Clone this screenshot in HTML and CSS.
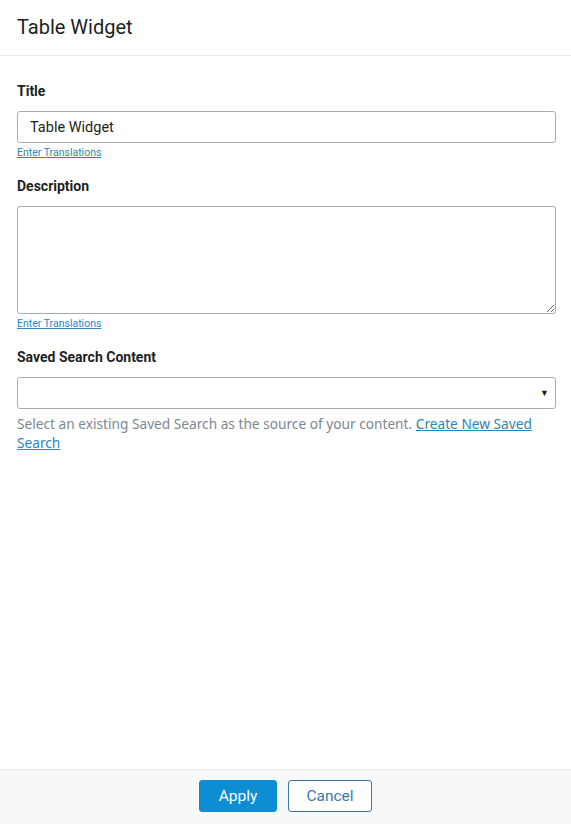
FILE: index.html
```html
<!DOCTYPE html>
<html>
<head>
<meta charset="utf-8">
<link rel="stylesheet" href="styles.css">
</head>
<body>
<div class="panel">
  <header class="head"><h1 class="head-title">Table Widget</h1></header>
  <main class="body">
    <div class="field">
      <label class="label">Title</label>
      <input class="input" type="text" value="Table Widget">
      <a class="trans" href="#">Enter Translations</a>
    </div>
    <div class="field">
      <label class="label">Description</label>
      <textarea class="textarea"></textarea>
      <a class="trans" href="#">Enter Translations</a>
    </div>
    <div class="field">
      <label class="label">Saved Search Content</label>
      <div class="select"><span class="caret">▼</span></div>
      <p class="help">Select an existing Saved Search as the source of your content. <a class="help-link" href="#">Create New Saved Search</a></p>
    </div>
  </main>
  <footer class="foot">
    <button class="btn btn-primary">Apply</button>
    <button class="btn btn-secondary">Cancel</button>
  </footer>
</div>
</body>
</html>
```
FILE: styles.css
```css
* { box-sizing: border-box; }
html, body { margin: 0; padding: 0; height: 100%; }
body { font-family: Roboto, "Noto Sans", sans-serif; color: #1d1f22; background: #fff; }
.panel { display: flex; flex-direction: column; height: 824px; }
.head { height: 56px; border-bottom: 1px solid #e3e6e8; padding: 0 17px; display: flex; align-items: center; }
.head-title { margin: 0; font-size: 20px; font-weight: 400; letter-spacing: 0; padding-bottom: 2px; }
.body { flex: 1; padding: 26px 15px 0 17px; }
.field { display: flex; flex-direction: column; margin-bottom: 18px; }
.label { font-size: 14px; font-weight: 700; line-height: 18px; margin-bottom: 11px; letter-spacing: 0; }
.input { height: 32px; margin: 0; border: 1px solid #a4adb3; border-radius: 3px; padding: 0 12px; font: 14.5px Roboto, "Noto Sans", sans-serif; color: #1d1f22; width: 100%; }
.textarea { height: 108px; margin: 0; border: 1px solid #a4adb3; border-radius: 3px; width: 100%; resize: vertical; display: block; font: 14px Roboto, sans-serif; }
.trans { font-size: 10.5px; color: #2a86c0; line-height: 13px; margin-top: 3px; align-self: flex-start; text-decoration: underline; }
.select { height: 32px; border: 1px solid #a4adb3; border-radius: 3px; display: flex; align-items: center; justify-content: flex-end; padding-right: 6px; }
.caret { font-size: 9px; color: #1d1f22; }
.help { margin: 5px 0 0; font-family: "Noto Sans", sans-serif; font-size: 13.7px; line-height: 19px; color: #7b8891; }
.help-link { color: #2a86c0; text-decoration: underline; }
.foot { height: 55px; border-top: 1px solid #e3e6e8; background: #f6f8f9; display: flex; justify-content: center; align-items: flex-start; padding-top: 10px; gap: 11px; }
.btn { height: 32px; border-radius: 3px; font: 15.5px Roboto, sans-serif; cursor: pointer; }
.btn-primary { width: 78px; background: #0d8dd3; color: #fff; border: 1px solid #0d8dd3; }
.btn-secondary { width: 84px; background: #fff; color: #3b7aa6; border: 1px solid #3b7aa6; }
```
